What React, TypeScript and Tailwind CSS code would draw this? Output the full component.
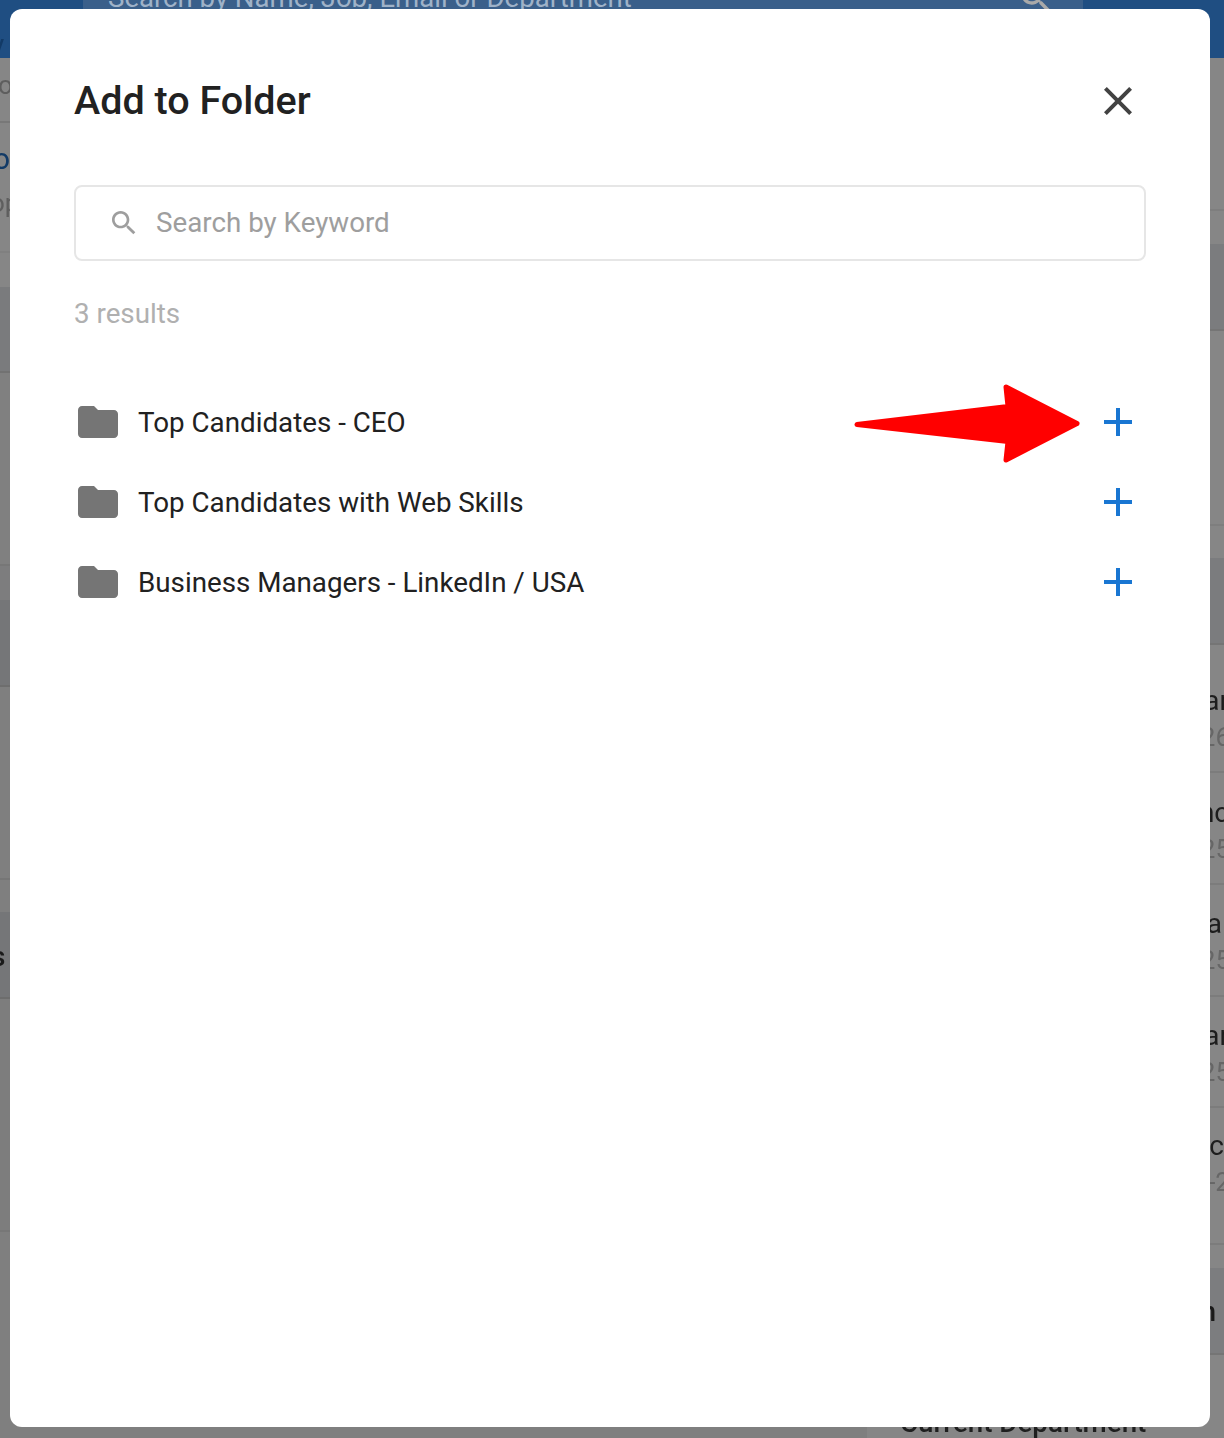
const folders = [
  "Top Candidates - CEO",
  "Top Candidates with Web Skills",
  "Business Managers - LinkedIn / USA",
];

const people = [
  { h: "h-[128px]", name: "ar", sub: "26", pt: "pt-[38px]", mr: "-mr-[5px]" },
  { h: "h-[112px]", name: "nc", sub: "25", pt: "pt-[22px]", mr: "-mr-[5px]" },
  { h: "h-[112px]", name: "a", sub: "25", pt: "pt-[21px]", mr: "mr-[2px]" },
  { h: "h-[111px]", name: "ar", sub: "25", pt: "pt-[21px]", mr: "-mr-[5px]" },
  { h: "h-[137px]", name: "c", sub: "-2", pt: "pt-[20px]", mr: "mr-0" },
];

function FolderIcon() {
  return (
    <svg width="48" height="48" viewBox="0 0 24 24" fill="#757575" className="shrink-0">
      <path d="M10 4H4c-1.1 0-1.99.9-1.99 2L2 18c0 1.1.9 2 2 2h16c1.1 0 2-.9 2-2V8c0-1.1-.9-2-2-2h-8l-2-2z" />
    </svg>
  );
}

function Backdrop() {
  return (
    <div className="blur-[0.6px]">
      <div className="h-[58px] bg-[#1f4e82] pl-[83px]">
        <div className="flex h-[10px] w-[1000px] justify-between overflow-hidden bg-[#3a5f8a] pl-[25px] pr-[27px] text-[#9fb2c8]">
          <span className="-mt-[20px] text-[27.6px] leading-[36px] whitespace-nowrap">
            Search by Name, Job, Email or Department
          </span>
          <svg width="40" height="40" viewBox="0 0 24 24" fill="#a9a9a9" className="-mt-[22px]">
            <path d="M15.5 14h-.79l-.28-.27C15.41 12.59 16 11.11 16 9.5 16 5.91 13.09 3 9.5 3S3 5.91 3 9.5 5.91 16 9.5 16c1.61 0 3.09-.59 4.23-1.57l.27.28v.79l5 4.99L20.49 19l-4.99-5zm-6 0C7.01 14 5 11.99 5 9.5S7.01 5 9.5 5 14 7.01 14 9.5 11.99 14 9.5 14z" />
          </svg>
        </div>
      </div>
      <div className="flex h-[1380px] bg-[#868686]">
        <div className="w-[867px] bg-[#7f7f7f]">
          <div className="flow-root h-[65px] border-b-2 border-[#787878] bg-[#868686] text-[26px] leading-[36px] text-[#5e5e5e]">
            <div className="-mt-[31px] -ml-[9px] text-[28px] text-[#123a66]">y</div>
            <div className="mt-[4px] -ml-[2px]">ol</div>
          </div>
          <div className="h-[130px] border-b-2 border-[#808080] bg-[#868686] pt-[18px]">
            <div className="-ml-[7px] text-[30px] leading-[36px] text-[#123a66]">o</div>
            <div className="-ml-[10px] mt-[8px] text-[26px] leading-[36px] text-[#5e5e5e]">op</div>
          </div>
          <div className="h-[34px] bg-[#868686]" />
          <div className="h-[86px] border-b-2 border-[#727272] bg-[#7a7b7d]" />
          <div className="h-[193px] border-b-2 border-[#777777] bg-[#808080]" />
          <div className="h-[34px] bg-[#7d7d7e]" />
          <div className="h-[87px] border-b-2 border-[#6e6e6e] bg-[#757678]" />
          <div className="h-[193px] border-b-2 border-[#767676] bg-[#7f7f7f]" />
          <div className="h-[32px] bg-[#7f7f7f]" />
          <div className="h-[87px] border-b-2 border-[#6d6d6d] bg-[#757678] pt-[27px]">
            <div className="-ml-[9px] text-[28px] leading-[36px] font-medium text-[#1a1a1a]">s</div>
          </div>
          <div className="h-[233px] border-b-2 border-[#777777] bg-[#7d7d7d]" />
        </div>
        <div className="flex-1">
          <div className="h-[153px] border-b-2 border-[#7e7e7e]" />
          <div className="h-[33px]" />
          <div className="h-[87px] border-b-2 border-[#757575] bg-[#7b7c7e]" />
          <div className="h-[195px] border-b-2 border-[#7e7e7e]" />
          <div className="h-[32px]" />
          <div className="h-[87px] border-b-2 border-[#757575] bg-[#7b7c7e]" />
          {people.map((p, i) => (
            <div key={i} className={`${p.h} ${p.pt} border-b-2 border-[#7c7c7c] text-right`}>
              <div className={`${p.mr} text-[28px] leading-[36px] text-[#1d1d1d]`}>{p.name}</div>
              <div className="-mr-[6px] text-[26px] leading-[36px] text-[#666666]">{p.sub}</div>
            </div>
          ))}
          <div className="h-[23px]" />
          <div className="h-[87px] border-b-2 border-[#757575] bg-[#7c7d7f] pt-[26px] pr-[8px] text-right text-[28px] leading-[36px] font-medium text-[#1a1a1a]">
            n
          </div>
          <div className="pl-[33px] pt-[50px] text-[27.75px] leading-[36px] font-medium whitespace-nowrap text-[#1f1f1f]">
            Current Department
          </div>
        </div>
      </div>
    </div>
  );
}

export default function App() {
  return (
    <div className="relative h-[1438px] w-[1224px] overflow-hidden font-['Roboto',sans-serif]">
      <Backdrop />
      {/* modal */}
      <div className="absolute top-[9px] left-[10px] h-[1418px] w-[1200px] rounded-[12px] bg-white px-[64px] pt-[64px]">
        <div className="flex h-[56px] items-center justify-between">
          <h1 className="text-[39.5px] leading-[56px] font-medium text-[#212121]">Add to Folder</h1>
          <svg width="48" height="48" viewBox="0 0 24 24" fill="#424242" className="mr-[4px]">
            <path d="M19 6.41 17.59 5 12 10.59 6.41 5 5 6.41 10.59 12 5 17.59 6.41 19 12 13.41 17.59 19 19 17.59 13.41 12z" />
          </svg>
        </div>
        <div className="mt-[56px] flex h-[76px] items-center rounded-[8px] border-2 border-[#e6e6e6] pl-[32px]">
          <svg width="32" height="32" viewBox="0 0 24 24" fill="#9e9e9e" className="shrink-0">
            <path d="M15.5 14h-.79l-.28-.27C15.41 12.59 16 11.11 16 9.5 16 5.91 13.09 3 9.5 3S3 5.91 3 9.5 5.91 16 9.5 16c1.61 0 3.09-.59 4.23-1.57l.27.28v.79l5 4.99L20.49 19l-4.99-5zm-6 0C7.01 14 5 11.99 5 9.5S7.01 5 9.5 5 14 7.01 14 9.5 11.99 14 9.5 14z" />
          </svg>
          <span className="ml-[16px] text-[27.75px] leading-[36px] text-[#9e9e9e]">Search by Keyword</span>
        </div>
        <div className="mt-[35px] text-[27.75px] leading-[36px] text-[#b0b0b0]">3 results</div>
        <div className="mt-[50px]">
          {folders.map((name, i) => (
            <div key={name} className="relative flex h-[80px] items-center">
              <FolderIcon />
              <span className="ml-[16px] flex-1 pt-[2px] text-[27.75px] leading-[36px] text-[#212121]">{name}</span>
              <svg width="48" height="48" viewBox="0 0 24 24" fill="#1976d2" className="mr-[4px]">
                <path d="M19 13h-6v6h-2v-6H5v-2h6V5h2v6h6v2z" />
              </svg>
              {i === 0 && (
                <svg
                  width="232"
                  height="84"
                  viewBox="0 0 232 84"
                  className="absolute top-0 left-[777px]"
                  fill="#ff0000"
                  stroke="#ff0000"
                  strokeWidth="5"
                  strokeLinejoin="round"
                >
                  <polygon points="6,42.5 157,24.5 155,5 226,41.5 155,78 157,59.5" />
                </svg>
              )}
            </div>
          ))}
        </div>
      </div>
    </div>
  );
}
